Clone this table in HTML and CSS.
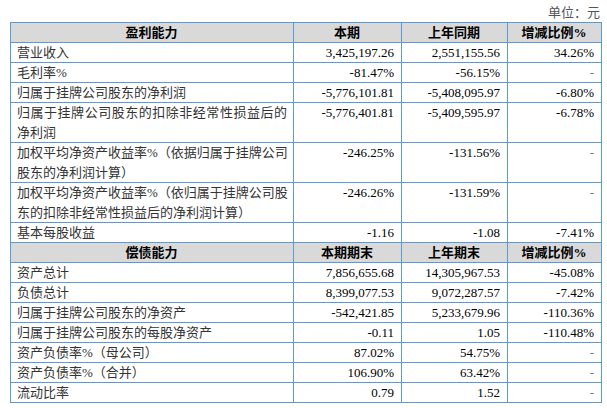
FILE: index.html
```html
<!DOCTYPE html>
<html lang="zh-CN">
<head>
<meta charset="utf-8">
<title>主要财务数据</title>
<link rel="stylesheet" href="styles.css">
</head>
<body>
<div class="page">
  <div class="unit">单位：元</div>
  <table class="fin">
    <colgroup>
      <col class="c1"><col class="c2"><col class="c3"><col class="c4">
    </colgroup>
    <tr class="head">
      <th>盈利能力</th><th>本期</th><th>上年同期</th><th>增减比例%</th>
    </tr>
    <tr><td class="lab">营业收入</td><td>3,425,197.26</td><td>2,551,155.56</td><td>34.26%</td></tr>
    <tr><td class="lab">毛利率%</td><td>-81.47%</td><td>-56.15%</td><td class="dash">-</td></tr>
    <tr><td class="lab">归属于挂牌公司股东的净利润</td><td>-5,776,101.81</td><td>-5,408,095.97</td><td>-6.80%</td></tr>
    <tr class="multi">
      <td class="lab"><span class="ln full">归属于挂牌公司股东的扣除非经常性损益后的</span><span class="ln">净利润</span></td>
      <td>-5,776,401.81</td><td>-5,409,595.97</td><td>-6.78%</td>
    </tr>
    <tr class="multi">
      <td class="lab"><span class="ln full">加权平均净资产收益率%（依据归属于挂牌公司</span><span class="ln">股东的净利润计算）</span></td>
      <td>-246.25%</td><td>-131.56%</td><td class="dash">-</td>
    </tr>
    <tr class="multi">
      <td class="lab"><span class="ln full">加权平均净资产收益率%（依归属于挂牌公司股</span><span class="ln">东的扣除非经常性损益后的净利润计算）</span></td>
      <td>-246.26%</td><td>-131.59%</td><td class="dash">-</td>
    </tr>
    <tr><td class="lab">基本每股收益</td><td>-1.16</td><td>-1.08</td><td>-7.41%</td></tr>
    <tr class="head">
      <th>偿债能力</th><th>本期期末</th><th>上年期末</th><th>增减比例%</th>
    </tr>
    <tr><td class="lab">资产总计</td><td>7,856,655.68</td><td>14,305,967.53</td><td>-45.08%</td></tr>
    <tr><td class="lab">负债总计</td><td>8,399,077.53</td><td>9,072,287.57</td><td>-7.42%</td></tr>
    <tr><td class="lab">归属于挂牌公司股东的净资产</td><td>-542,421.85</td><td>5,233,679.96</td><td>-110.36%</td></tr>
    <tr><td class="lab">归属于挂牌公司股东的每股净资产</td><td>-0.11</td><td>1.05</td><td>-110.48%</td></tr>
    <tr><td class="lab">资产负债率%（母公司）</td><td>87.02%</td><td>54.75%</td><td class="dash">-</td></tr>
    <tr><td class="lab">资产负债率%（合并）</td><td>106.90%</td><td>63.42%</td><td class="dash">-</td></tr>
    <tr><td class="lab">流动比率</td><td>0.79</td><td>1.52</td><td class="dash">-</td></tr>
  </table>
</div>
</body>
</html>
```

FILE: styles.css
```css
html, body {
  margin: 0;
  padding: 0;
  background: #ffffff;
}

body {
  font-family: "Liberation Serif", "Noto Sans CJK SC", serif;
  font-size: 13px;
  color: #000;
}

.page {
  padding: 3px 0 0 10px;
  width: 591px;
}

.unit {
  text-align: right;
  line-height: 19px;
  color: #555;
  padding-right: 1px;
}

.fin {
  border-collapse: collapse;
  table-layout: fixed;
  width: 591px;
}

.c1 { width: 283px; }
.c2 { width: 108px; }
.c3 { width: 106px; }
.c4 { width: 94px; }

.fin th,
.fin td {
  border: 1px solid #5b9bd5;
  padding: 0 7px 0 6px;
  line-height: 19px;
  vertical-align: top;
  white-space: nowrap;
}

.fin td {
  text-align: right;
}

.fin .head th {
  background: #d9d9d9;
  font-family: "Liberation Serif", "Noto Sans CJK SC", sans-serif;
  font-weight: 700;
  text-align: center;
  color: #000;
}

.fin td.lab {
  text-align: left;
  color: #333;
  padding-right: 6px;
}

.fin .multi td {
  line-height: 19.5px;
}

.ln {
  display: block;
}

.ln.full {
  text-align: justify;
  text-align-last: justify;
}

.fin td.dash {
  color: #777;
}
```
